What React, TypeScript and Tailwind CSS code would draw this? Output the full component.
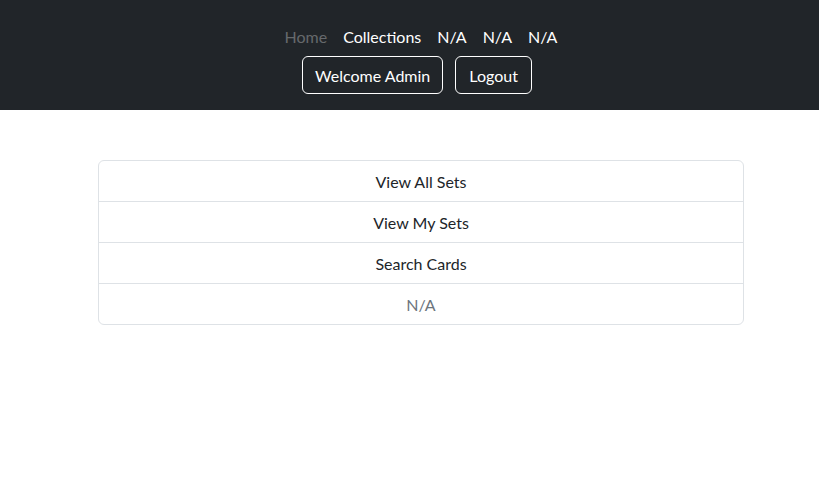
import React from "react";

export default function App() {
  const font = { fontFamily: '"Segoe UI", Lato, "Noto Sans", sans-serif' };
  const links = ["Collections", "N/A", "N/A", "N/A"];
  const items = ["View All Sets", "View My Sets", "Search Cards"];
  return (
    <div className="min-h-[503px] bg-white text-[16px] leading-6 text-[#212529]" style={font}>
      <nav className="bg-[#212529] pt-[17px] pb-[16px]">
        <div className="flex h-[39px] items-center justify-center pl-[23px] pt-[1px]">
          <a className="px-2 text-[#66696c]">Home</a>
          {links.map((l, i) => (
            <a key={i} className="px-2 text-white">
              {l}
            </a>
          ))}
        </div>
        <div className="flex justify-center gap-3 pl-[15px]">
          <button className="h-[38px] rounded-md border border-white px-3 pt-[1px] text-white">Welcome Admin</button>
          <button className="h-[38px] rounded-md border border-white px-[13px] pt-[1px] text-white">Logout</button>
        </div>
      </nav>
      <div className="ml-[98px] mt-[50px] w-[646px] overflow-hidden rounded-md border border-[#dee2e6]">
        {items.map((t) => (
          <div key={t} className="flex h-[41px] items-center justify-center border-b border-[#dee2e6] pt-[2px]">
            {t}
          </div>
        ))}
        <div className="flex h-[40px] items-center justify-center pt-[2px] text-[#6c757d]">N/A</div>
      </div>
    </div>
  );
}
